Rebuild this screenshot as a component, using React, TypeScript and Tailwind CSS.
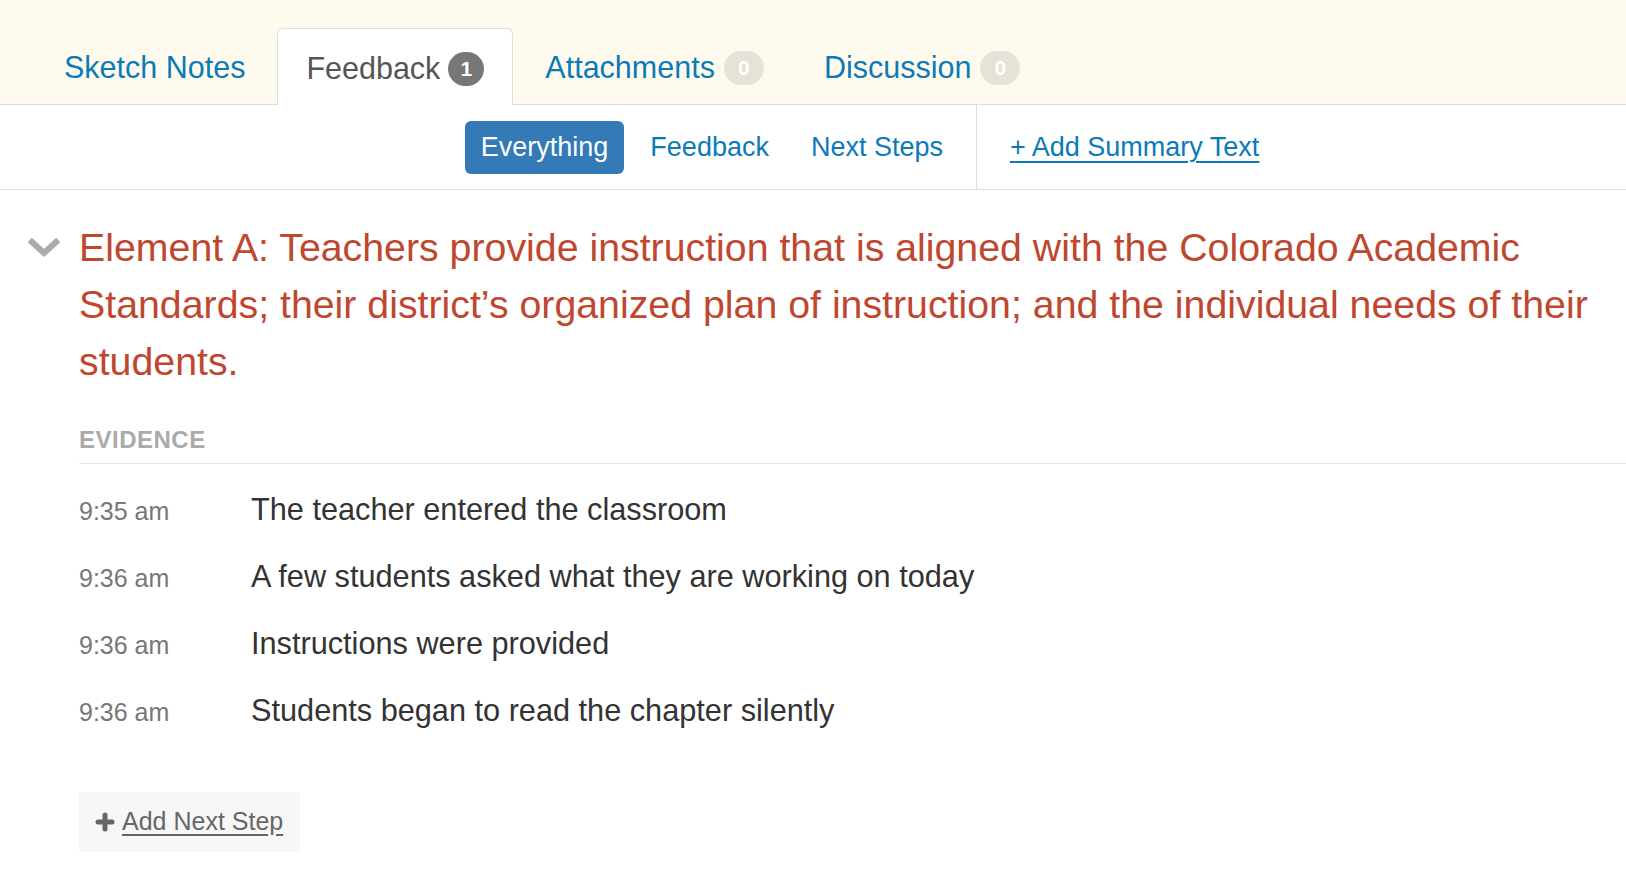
import { Plus } from "lucide-react";

const rows = [
  { time: "9:35 am", text: "The teacher entered the classroom" },
  { time: "9:36 am", text: "A few students asked what they are working on today" },
  { time: "9:36 am", text: "Instructions were provided" },
  { time: "9:36 am", text: "Students began to read the chapter silently" },
];

function Badge({ n, dark }: { n: number; dark?: boolean }) {
  return (
    <span
      className={
        dark
          ? "ml-[8px] inline-flex h-[34px] min-w-[36px] items-center justify-center rounded-full bg-[#777] px-2 text-[21px] font-bold text-white"
          : "ml-[9px] inline-flex h-[34px] min-w-[40px] items-center justify-center rounded-full bg-[#e6e2d8] px-2 text-[21px] font-bold text-white"
      }
    >
      {n}
    </span>
  );
}

export default function App() {
  return (
    <div className="min-h-screen bg-white font-['Liberation_Sans',Arial,sans-serif] text-[#333]">
      {/* tabs */}
      <div className="flex items-end gap-1 border-b border-[#ddd] bg-[#fffaee] pl-9 pt-[28px]">
        <div className="flex h-[76px] items-center px-7 pt-1 text-[30.5px] text-[#0b7ab8]">
          Sketch Notes
        </div>
        <div className="-mb-px flex h-[77px] items-center rounded-t-[6px] border border-b-0 border-[#ddd] bg-white px-7 pt-1 text-[30.5px] text-[#555]">
          Feedback
          <Badge n={1} dark />
        </div>
        <div className="flex h-[76px] items-center px-7 pt-1 text-[30.5px] text-[#0b7ab8]">
          Attachments
          <Badge n={0} />
        </div>
        <div className="flex h-[76px] items-center px-7 pt-1 text-[30.5px] text-[#0b7ab8]">
          Discussion
          <Badge n={0} />
        </div>
      </div>

      {/* filter row */}
      <div className="flex h-[85px] border-b border-[#ddd]">
        <div className="flex w-[977px] items-center justify-end gap-[10px] border-r border-[#ddd] pr-[17px]">
          <button className="h-[53px] rounded-[6px] bg-[#337ab7] px-4 text-[27px] text-white">
            Everything
          </button>
          <button className="h-[53px] px-4 text-[27px] text-[#0b7ab8]">Feedback</button>
          <button className="h-[53px] px-4 text-[27px] text-[#0b7ab8]">Next Steps</button>
        </div>
        <div className="flex items-center pl-[33px]">
          <a className="text-[27px] text-[#0b7ab8] underline underline-offset-[5px]">
            + Add Summary Text
          </a>
        </div>
      </div>

      {/* element */}
      <div className="flex pt-[29px]">
        <div className="w-[79px] shrink-0 pl-[28px] pt-[19px]">
          <svg width="32" height="20" viewBox="0 0 32 20" fill="none">
            <path d="M4 4l12 11L28 4" stroke="#aaa" strokeWidth="6" strokeLinecap="square" />
          </svg>
        </div>
        <div className="min-w-0 flex-1">
          <h2 className="pr-5 text-[39.3px] leading-[57px] text-[#c0472f]">
            Element A: Teachers provide instruction that is aligned with the Colorado Academic
            Standards; their district’s organized plan of instruction; and the individual needs of
            their students.
          </h2>

          <div className="mt-[34px] border-b border-[#e5e5e5] pb-[7px] text-[24px] font-bold leading-[32px] tracking-[0.5px] text-[#aaa]">
            EVIDENCE
          </div>

          <div className="pt-[7px]">
            {rows.map((r, i) => (
              <div key={i} className="flex h-[67px] items-baseline pt-[16px]">
                <div className="w-[172px] shrink-0 text-[25px] text-[#777]">{r.time}</div>
                <div className="text-[30.7px] text-[#333]">{r.text}</div>
              </div>
            ))}
          </div>

          <button className="mt-[53px] flex h-[60px] items-center gap-[5px] bg-[#f7f7f7] pl-[14px] pr-[17px] text-[25px] text-[#666]">
            <Plus size={24} strokeWidth={5} className="text-[#666]" />
            <span className="underline underline-offset-[4px]">Add Next Step</span>
          </button>
        </div>
      </div>
    </div>
  );
}
